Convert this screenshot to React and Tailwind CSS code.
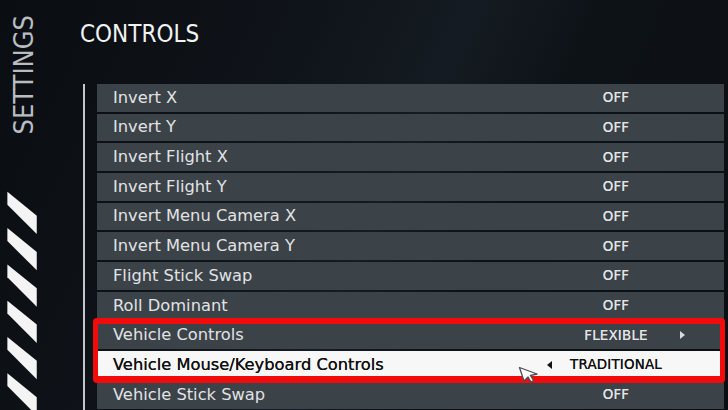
import React from 'react';

const rows = [
  { label: 'Invert X', value: 'OFF' },
  { label: 'Invert Y', value: 'OFF' },
  { label: 'Invert Flight X', value: 'OFF' },
  { label: 'Invert Flight Y', value: 'OFF' },
  { label: 'Invert Menu Camera X', value: 'OFF' },
  { label: 'Invert Menu Camera Y', value: 'OFF' },
  { label: 'Flight Stick Swap', value: 'OFF' },
  { label: 'Roll Dominant', value: 'OFF' },
];

const labelFont = { fontFamily: '"DejaVu Sans", "Liberation Sans", sans-serif' };

const Stripes = () => (
  <svg width="46" height="240" viewBox="0 0 46 240" className="-ml-[10px] mt-[55px] block">
    {[0, 1, 2, 3, 4, 5].map((i) => {
      const y = i * 39.5;
      return (
        <polygon
          key={i}
          points={`6,${y + 2} 38,${y + 28} 38,${y + 48} 6,${y + 16}`}
          fill="#f4f4f4"
        />
      );
    })}
  </svg>
);

const Row = ({ label, value, selected, arrow }) => (
  <div
    className={`h-[27.7px] mb-[2px] flex items-center ${selected ? 'bg-[#f7f7f7] text-[#111]' : 'bg-[#3b4248] text-[#e1e3e5]'}`}
  >
    <span
      className={`flex-1 pl-[16px] text-[16.3px] leading-none whitespace-nowrap ${selected ? '[text-shadow:0_0_0.4px_#111]' : ''}`}
      style={labelFont}
    >
      {label}
    </span>
    <span
      className="relative w-[152px] mr-[32px] text-center text-[13.4px] leading-none tracking-[0.2px] [text-shadow:0_0_0.3px_currentColor]"
      style={labelFont}
    >
      {arrow === 'left' && (
        <span className="absolute left-[7px] top-1/2 -translate-y-1/2 w-0 h-0 border-y-[4.5px] border-y-transparent border-r-[5px] border-r-[#111]" />
      )}
      {value}
      {arrow === 'right' && (
        <span className="absolute right-[7px] top-1/2 -translate-y-1/2 w-0 h-0 border-y-[4.5px] border-y-transparent border-l-[5px] border-l-[#d8dadc]" />
      )}
    </span>
  </div>
);

const Cursor = () => (
  <svg width="22" height="18" viewBox="0 0 22 18" className="absolute left-[421px] top-[44px] z-20">
    <path
      d="M1.5 1.5 L19 8 L12.5 9.5 L15.5 14.5 L13 16 L10 11 L6 15 Z"
      fill="#ffffff"
      stroke="#4a4f55"
      strokeWidth="1.3"
      strokeLinejoin="round"
    />
  </svg>
);

export default function App() {
  return (
    <div className="w-[728px] h-[410px] overflow-hidden flex bg-[linear-gradient(115deg,#0a0d11_0%,#0f141a_35%,#151b22_52%,#0d1217_66%,#0b0f13_100%)]">
      <aside className="w-[80px] shrink-0 flex flex-col pt-[15px] pl-[10px]">
        <div
          className="[writing-mode:vertical-rl] rotate-180 text-[27px] leading-none font-light text-[#b9bdc1] font-stretch-condensed"
          style={{ fontFamily: '"DejaVu Sans Condensed", "DejaVu Sans", sans-serif' }}
        >
          SETTINGS
        </div>
        <Stripes />
      </aside>

      <main className="flex-1 flex flex-col">
        <h1
          className="pt-[22px] text-[24px] leading-none text-[#f2f2f2] font-normal font-stretch-condensed"
          style={{ fontFamily: '"DejaVu Sans Condensed", "DejaVu Sans", sans-serif' }}
        >
          CONTROLS
        </h1>

        <div className="mt-[38px] flex flex-1">
          <div className="ml-[3px] w-[2px] bg-[#c3c7cb]" />
          <div className="ml-[12px] w-[627px]">
            {rows.map((r) => (
              <Row key={r.label} label={r.label} value={r.value} />
            ))}
            <div className="relative">
              <Row label="Vehicle Controls" value="FLEXIBLE" arrow="right" />
              <Row label="Vehicle Mouse/Keyboard Controls" value="TRADITIONAL" arrow="left" selected />
              <div className="absolute -top-[4px] -bottom-[4px] -left-[4px] -right-[1px] border-[5px] border-t-[6px] border-b-[7px] border-[#f20b0b] rounded-[4px] z-10 pointer-events-none" />
              <Cursor />
            </div>
            <Row label="Vehicle Stick Swap" value="OFF" />
          </div>
        </div>
      </main>
    </div>
  );
}
